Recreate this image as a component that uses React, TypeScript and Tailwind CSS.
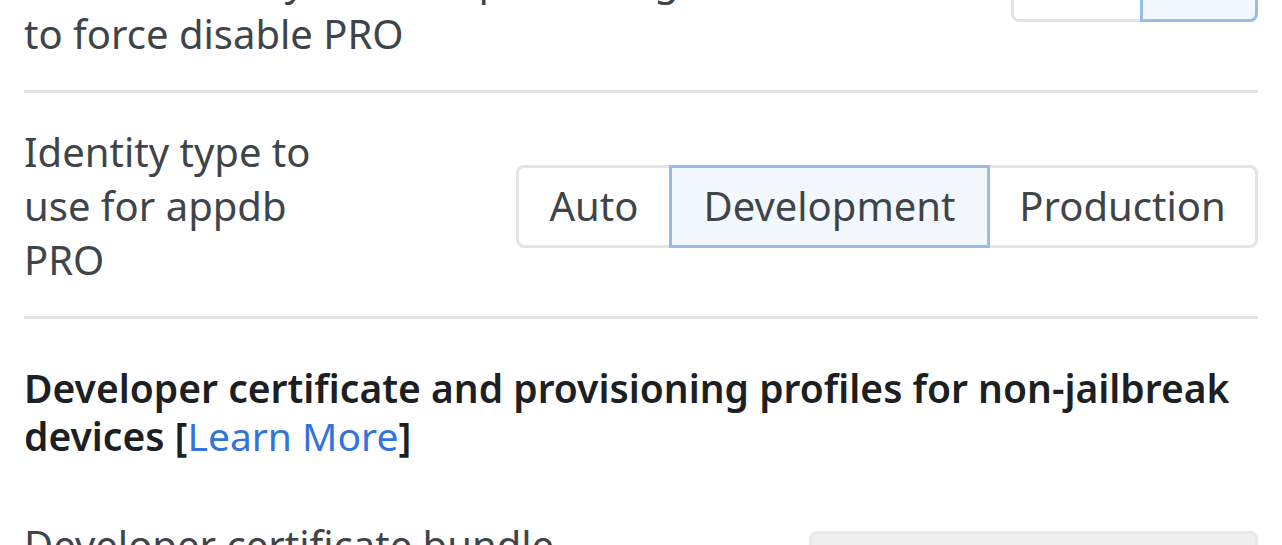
import React from "react";

const font = { fontFamily: '"Noto Sans", "Open Sans", sans-serif' };

function Segmented({
  options,
  selected,
  widths,
}: {
  options: string[];
  selected: number;
  widths: string[];
}) {
  return (
    <div className="flex shrink-0">
      {options.map((o, i) => (
        <button
          key={o}
          className={[
            "relative flex h-[83px] items-center justify-center border-[3px] text-[40px] text-[#3f4449]",
            widths[i],
            i > 0 ? "-ml-[3px]" : "",
            i === 0 ? "rounded-l-[8px]" : "",
            i === options.length - 1 ? "rounded-r-[8px]" : "",
            i === selected
              ? "z-10 border-[#97bce9] bg-[#f2f8fd]"
              : "border-[#e4e4e4] bg-white",
          ].join(" ")}
        >
          {o}
        </button>
      ))}
    </div>
  );
}

export default function App() {
  return (
    <div
      className="h-[545px] w-[1282px] overflow-hidden bg-white"
      style={font}
    >
      <div className="mt-[-133px] px-[24px]">
        <div className="flex items-center justify-between border-b-[3px] border-[#e3e3e3] pb-[29px] pt-[32px]">
          <div className="w-[900px] text-[40px] leading-[54px] text-[#3f4449]">
            Disable appdb PRO features on this device
            <br />
            Set it to Yes if you are experiencing issues
            <br />
            to force disable PRO
          </div>
          <Segmented
            options={["No", "Yes"]}
            selected={1}
            widths={["w-[132px]", "w-[118px]"]}
          />
        </div>

        <div className="flex items-center justify-between border-b-[3px] border-[#e3e3e3] pb-[29px] pt-[32px]">
          <div className="w-[300px] text-[40px] leading-[54px] text-[#3f4449]">
            Identity type to use for appdb PRO
          </div>
          <Segmented
            options={["Auto", "Development", "Production"]}
            selected={1}
            widths={["w-[156px]", "w-[321px]", "w-[271px]"]}
          />
        </div>

        <div className="pt-[45px]">
          <h2 className="text-[39px] font-semibold leading-[48px] text-[#1c1f23]">
            Developer certificate and provisioning profiles for{" "}
            <span className="whitespace-nowrap">non-jailbreak</span> devices [
            <a className="font-normal text-[#3273dc]">Learn More</a>]
          </h2>
        </div>

        <div className="mt-[58px] flex items-center justify-between">
          <div className="w-[600px] text-[40px] leading-[54px] text-[#3f4449]">
            Developer certificate bundle
            <br />
            (.p12)
          </div>
          <div className="h-[83px] w-[449px] rounded-[8px] border-[3px] border-[#e8e8e8] bg-[#f0f0f0]" />
        </div>
      </div>
    </div>
  );
}
